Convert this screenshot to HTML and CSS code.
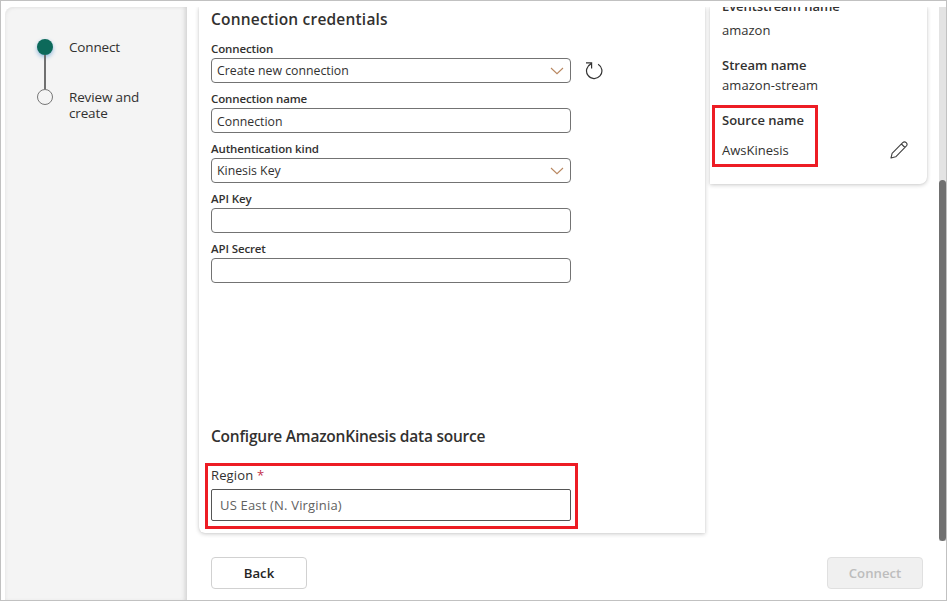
FILE: index.html
```
<!DOCTYPE html>
<html lang="en">
<head>
<meta charset="utf-8">
<title>Connect data source</title>
<link rel="stylesheet" href="styles.css">
</head>
<body>
<div class="window">
  <aside class="steps">
    <div class="rail">
      <span class="dot dot-active"></span>
      <span class="line"></span>
      <span class="dot"></span>
    </div>
    <div class="step-labels">
      <span class="step-label">Connect</span>
      <span class="step-label">Review and<br>create</span>
    </div>
  </aside>
  <main class="main">
    <div class="scroll">
      <section class="card form">
        <h2 class="title credentials">Connection credentials</h2>
        <div class="field">
          <span class="label">Connection</span>
          <div class="row">
            <div class="box"><span class="value">Create new connection</span>
              <svg class="chevron" width="14" height="8" viewBox="0 0 14 8"><path d="M1 1l6 5.7L13 1" fill="none" stroke="#b88760" stroke-width="1.1"/></svg>
            </div>
            <svg class="refresh" width="18" height="18" viewBox="0 0 18 18"><path d="M13.1 2.2A7.7 7.7 0 1 1 5.9 1.9M1 .9h5.6V6.5" fill="none" stroke="#333" stroke-width="1.2"/></svg>
          </div>
        </div>
        <div class="field">
          <span class="label">Connection name</span>
          <div class="box"><span class="value value-low">Connection</span></div>
        </div>
        <div class="field">
          <span class="label">Authentication kind</span>
          <div class="box"><span class="value">Kinesis Key</span>
            <svg class="chevron" width="14" height="8" viewBox="0 0 14 8"><path d="M1 1l6 5.7L13 1" fill="none" stroke="#b88760" stroke-width="1.1"/></svg>
          </div>
        </div>
        <div class="field">
          <span class="label">API Key</span>
          <div class="box"></div>
        </div>
        <div class="field">
          <span class="label">API Secret</span>
          <div class="box"></div>
        </div>
        <h2 class="title configure">Configure AmazonKinesis data source</h2>
        <div class="highlight region">
          <div class="region-label">Region <span class="required">*</span></div>
          <div class="region-box">US East (N. Virginia)</div>
        </div>
      </section>
      <section class="card summary">
        <div class="summary-title t-event">Eventstream name</div>
        <div class="summary-value s-amazon">amazon</div>
        <div class="summary-title">Stream name</div>
        <div class="summary-value s-stream">amazon-stream</div>
        <div class="source-row">
          <div class="highlight source">
            <div class="summary-title t-source">Source name</div>
            <div class="summary-value s-aws">AwsKinesis</div>
          </div>
          <svg class="pencil" width="18" height="18" viewBox="0 0 18 18"><path d="M1 17l1.1-4.7L12.7 1.7a2.45 2.45 0 0 1 3.5 3.5L5.7 15.8zM11.4 3l3.5 3.5" fill="none" stroke="#424242" stroke-width="1.1" stroke-linejoin="round"/></svg>
        </div>
      </section>
      <div class="track"><div class="thumb"></div></div>
    </div>
    <footer class="footer">
      <button class="btn">Back</button>
      <button class="btn btn-disabled" disabled>Connect</button>
    </footer>
  </main>
</div>
</body>
</html>
```

FILE: styles.css
```
* { box-sizing: border-box; }
body {
  margin: 0;
  font-family: "Open Sans", "Noto Sans", sans-serif;
  font-size: 13px;
  color: #323130;
  background: #fff;
}
.window {
  display: flex;
  width: 947px;
  height: 601px;
  padding: 6px 0 0 4px;
  border: 1px solid #c1c1c1;
  overflow: hidden;
}
.steps {
  display: flex;
  gap: 16px;
  width: 182px;
  padding: 32px 0 0 32px;
  border-radius: 8px 0 0 0;
  background: #f4f4f4;
  box-shadow: inset -4px 0 4px -2px #d2d2d2, inset 2px 2px 3px -1px #e8e8e8;
}
.rail {
  display: flex;
  flex-direction: column;
  align-items: center;
  width: 16px;
}
.dot {
  flex: none;
  width: 16px;
  height: 16px;
  border: 1px solid #777;
  border-radius: 50%;
}
.dot-active {
  border: 0;
  background: #0c695a;
  box-shadow: 0 2px 4px #8fb8dc;
}
.line { width: 2px; height: 34px; background: #707070; }
.step-labels {
  display: flex;
  flex-direction: column;
  gap: 34px;
  font-size: 13.5px;
  line-height: 16px;
  letter-spacing: -0.15px;
}
.main { width: 759px; }
.scroll { display: flex; height: 534px; padding-left: 12px; }
.card { background: #fff; box-shadow: 0 1px 4px #c9c9c9, 0 0 1px #ccc; clip-path: inset(0 -8px -8px -8px); }
.form { width: 506px; height: 526px; padding: 0 12px; border-radius: 0 0 0 6px; }
.title { margin: 0; font-size: 15.5px; line-height: 24px; font-weight: 600; white-space: nowrap; }
.credentials { letter-spacing: 0.2px; }
.field { height: 50px; }
.field:first-of-type { margin-top: 9px; }
.label {
  display: block;
  height: 18px;
  padding-top: 1px;
  font-size: 11.5px;
  line-height: 15px;
  font-weight: 600;
  letter-spacing: -0.12px;
}
.row { display: flex; align-items: center; gap: 14px; }
.box {
  display: flex;
  align-items: center;
  justify-content: space-between;
  width: 360px;
  height: 25px;
  padding: 0 6px 0 5px;
  border: 1px solid #737373;
  border-radius: 4px;
  font-size: 12.3px;
}
.value { line-height: 19px; }
.value-low { padding-top: 2px; }
.configure { margin-top: 134px; letter-spacing: -0.23px; }
.highlight { border: 3px solid #ed1c24; }
.region { width: 373px; height: 66px; margin: 15px 0 0 -6px; padding: 1px 3px; }
.region-label { height: 22px; line-height: 17px; letter-spacing: 0.15px; }
.required { color: #c4314b; }
.region-box {
  width: 360px;
  height: 32px;
  padding-left: 8px;
  border: 1px solid #555;
  border-radius: 2px;
  line-height: 31px;
  letter-spacing: 0.18px;
  color: #616161;
}
.summary { width: 217px; height: 177px; margin-left: 5px; padding-left: 12px; border-radius: 0 0 7px 0; overflow: hidden; }
.summary-title { height: 20px; line-height: 20px; font-weight: 600; }
.summary-value { height: 20px; line-height: 20px; }
.t-event { margin-top: -11px; letter-spacing: -0.06px; }
.s-amazon { margin: 4px 0 15px; }
.s-stream { letter-spacing: 0.06px; }
.source-row { display: flex; margin-top: 10px; }
.source { width: 106px; height: 62px; margin-left: -10px; padding: 2px 0 0 7px; }
.s-aws { margin-top: 10px; }
.pencil { margin: 36px 0 0 72px; }
.track { width: 7px; margin-left: 12px; padding-top: 173px; background: #e3e3e3; height: 534px; }
.thumb { height: 361px; border-radius: 4px; background: #707070; }
.footer { display: flex; justify-content: space-between; padding: 16px 23px 0 24px; }
.btn {
  width: 96px;
  height: 32px;
  padding: 0;
  border: 1px solid #d1d1d1;
  border-radius: 4px;
  background: #fff;
  color: #242424;
  font: 600 13.2px/30px "Open Sans", sans-serif;
}
.btn-disabled { border-color: #e0e0e0; background: #f0f0f0; color: #bdbdbd; }
```
